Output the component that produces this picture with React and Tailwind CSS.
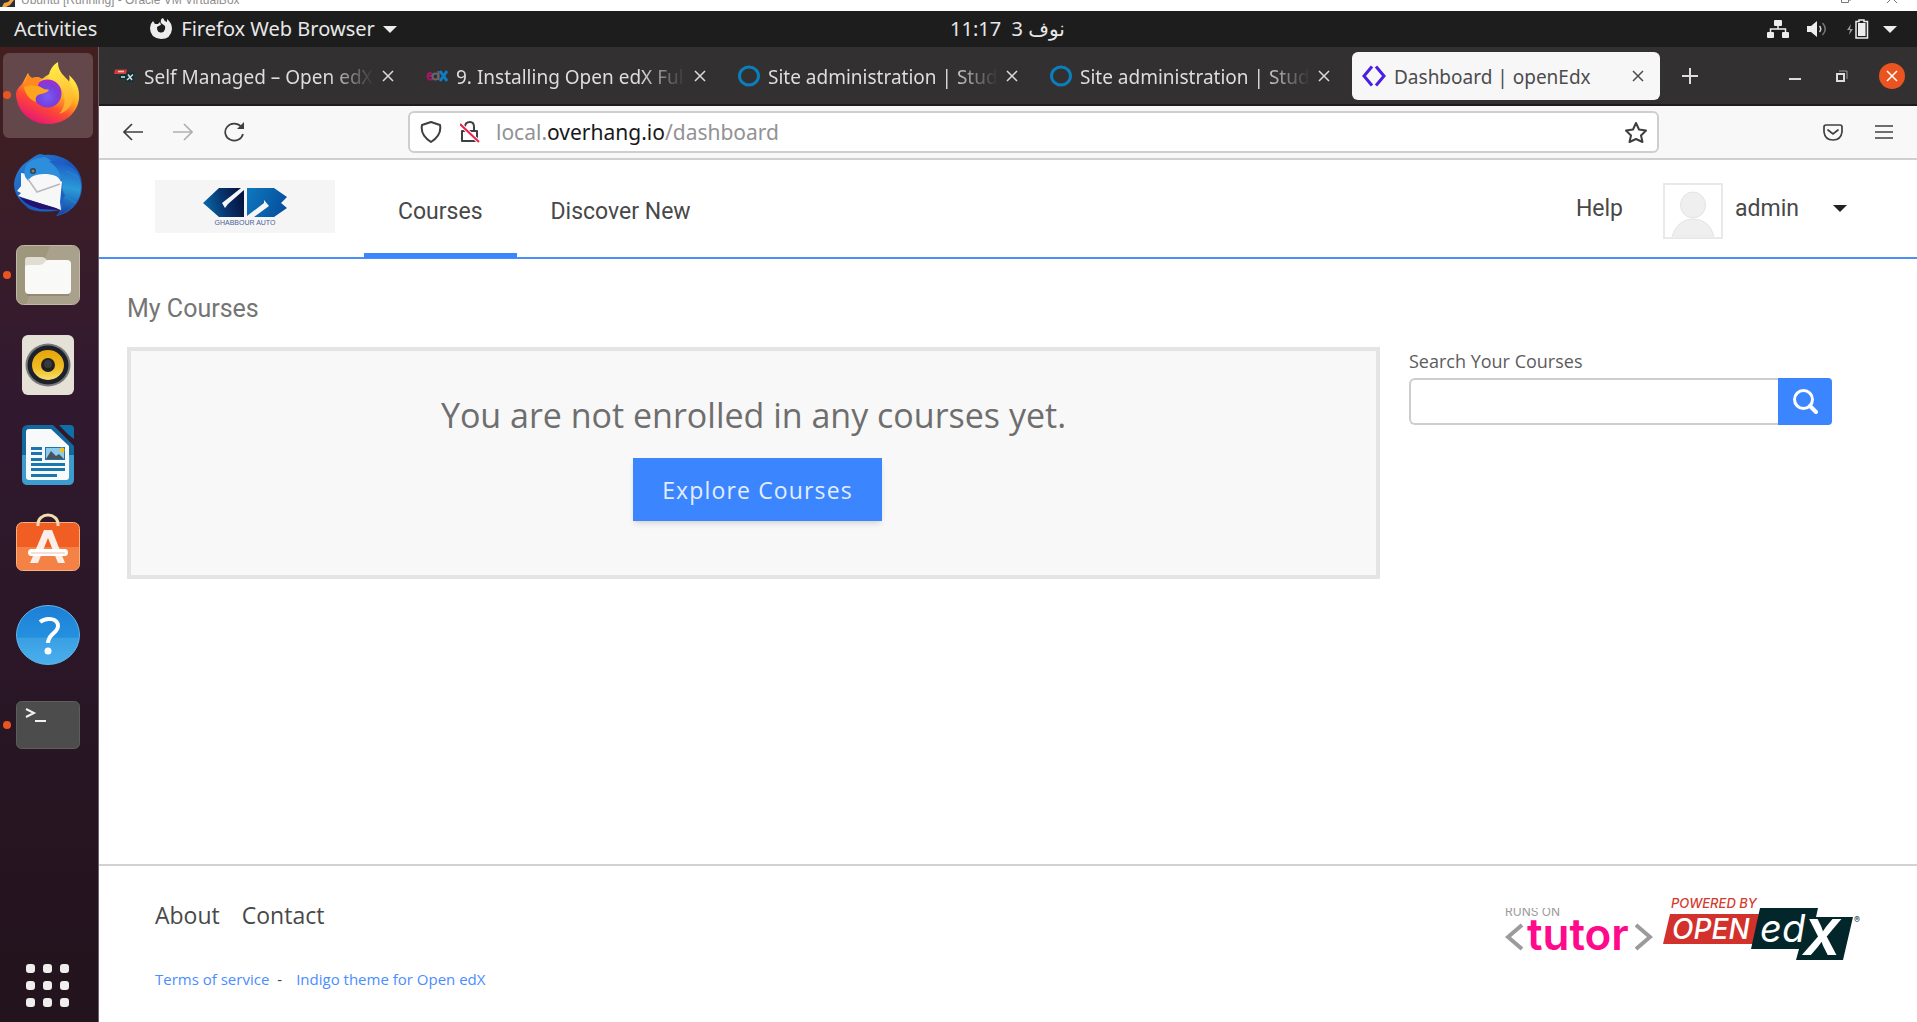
import React from "react";

const ui = "font-['Noto_Sans','DejaVu_Sans',sans-serif]";

function FirefoxIcon() {
  return (
    <svg viewBox="0 0 64 66" className="h-[66px] w-16" aria-hidden="true">
      <defs>
        <linearGradient id="ffBody" x1="0.85" y1="0.05" x2="0.25" y2="1">
          <stop offset="0" stopColor="#fff14a" />
          <stop offset="0.35" stopColor="#ffb020" />
          <stop offset="0.62" stopColor="#ff4b32" />
          <stop offset="1" stopColor="#e4107c" />
        </linearGradient>
        <linearGradient id="ffEar" x1="0.5" y1="0" x2="0.6" y2="1">
          <stop offset="0" stopColor="#fff04a" />
          <stop offset="1" stopColor="#ffa62a" />
        </linearGradient>
        <radialGradient id="ffGlobe" cx="0.5" cy="0.6" r="0.6">
          <stop offset="0" stopColor="#7a5cf5" />
          <stop offset="0.6" stopColor="#7540dc" />
          <stop offset="1" stopColor="#a52ad0" />
        </radialGradient>
      </defs>
      <path d="M6 22 C8 18 10 15 12 11 C13 14 14 15 16 16 C20 15 24 15 26 17 C30 14 33 12 34 12 C32 18 45 14 50 24 C54 21 54 16 53 13 C61 20 64 28 63 37 C61 52 48 62 32 62 C14 62 1 49 0 33 C0 28 3 25 6 22Z" fill="url(#ffBody)" />
      <path d="M33 17 C32 9 37 3 42 0 C42 9 47 13 52 18 C55 22 57 27 57 33 C57 43 51 50 43 52 C50 46 51 31 43 23 C40 20 36 18 33 17Z" fill="url(#ffEar)" />
      <circle cx="31.500" cy="31.500" r="14" fill="url(#ffGlobe)" />
      <path d="M8 25 C14 23 22 23 26 26 C29 28 31 27 33 28 C31 31 28 31 25 32 C20 33 19 36 20 40 C14 38 9 32 8 25Z" fill="#ffa51d" />
      <path d="M12 11 C13 14 14 15 16 16 C20 15 24 15 26 17 C23 20 22 22 22 24 C17 23 12 23 8 25 C9 20 11 15 12 11Z" fill="#ff8a24" />
    </svg>
  );
}

function ThunderbirdIcon() {
  return (
    <svg viewBox="0 0 68 64" className="h-16 w-[68px]" aria-hidden="true">
      <defs>
        <linearGradient id="tbBody" x1="0" y1="0" x2="1" y2="1">
          <stop offset="0" stopColor="#2b87d8" />
          <stop offset="0.5" stopColor="#1a57bd" />
          <stop offset="1" stopColor="#1f6bcb" />
        </linearGradient>
        <linearGradient id="tbWing" x1="0.6" y1="0" x2="0.5" y2="1">
          <stop offset="0" stopColor="#1c56c4" />
          <stop offset="0.5" stopColor="#2b9bd8" />
          <stop offset="1" stopColor="#1640a4" />
        </linearGradient>
      </defs>
      <path d="M26 1 L31 2 C48 0 68 12 68 33 C68 49 56 61 42 63 C44 61 46 59 46 57 C30 60 13 59 11 51 L17 57 C7 50 0 42 0 31 C1 21 6 13 14 8 C18 5 22 2 26 1Z" fill="url(#tbBody)" />
      <path d="M7 20 L20 22 L40 18 L48 29 L46 49 L47 57 L4 43 L7 40 L3 38 L7 33Z" fill="#f7f7f8" />
      <path d="M14 10 C20 5 25 5 31 4 C40 8 48 17 47 29 C45 23 39 21 30 21 C21 21 16 24 14 28 L12 25 C10 23 9 15 14 10Z" fill="#2d8edb" />
      <path d="M14 26 L23 39 L46 31" fill="none" stroke="#b8b9bf" strokeWidth="1.500" />
      <path d="M35 8 C58 9 68 20 67 36 C66 49 56 59 44 62 C49 56 50 52 49 47 L51 42 C47 38 49 33 48 29 C47 20 42 13 35 8Z" fill="url(#tbWing)" />
      <path d="M52 18 L65 24 M52 27 L67 33 M53 36 L66 42 M52 44 L62 50" stroke="#2d8edb" strokeWidth="1" opacity="0.7" />
      <circle cx="19" cy="18" r="3" fill="#304052" />
      <circle cx="19" cy="18" r="1.500" fill="#8b806a" />
      <path d="M5 43 C10 50 16 53 26 56 L46 57 L42 55 L8 45Z" fill="#25106b" />
    </svg>
  );
}

function FilesIcon() {
  return (
    <svg viewBox="0 0 64 60" className="h-[60px] w-16" aria-hidden="true">
      <rect x="0.500" y="0.500" width="63" height="59" rx="7" fill="#9f967e" stroke="#c0b9a8" />
      <path d="M34 1 H57 Q63 1 63 8 V52 Q63 59 57 59 H10 Z" fill="#a9a18b" />
      <path d="M9 23 V15 Q9 12 12 12 H26 Q28 12 30 14 L32 17 H50 V25Z" fill="#e1ddd0" />
      <path d="M9 22 Q9 20 12 20 H24 Q27 20 29 17 Q30 15 32 15 H51 Q55 15 55 19 V45 Q55 49 51 49 H13 Q9 49 9 45Z" fill="#f9f9f8" />
      <path d="M11 50 H53" stroke="#7f775f" strokeWidth="1" />
    </svg>
  );
}

function RhythmboxIcon() {
  return (
    <svg viewBox="0 0 52 60" className="h-[60px] w-[52px]" aria-hidden="true">
      <defs>
        <linearGradient id="rbCone" x1="0" y1="0" x2="0" y2="1">
          <stop offset="0" stopColor="#e5a60a" />
          <stop offset="0.6" stopColor="#efbd22" />
          <stop offset="1" stopColor="#f9e070" />
        </linearGradient>
      </defs>
      <rect x="0" y="0" width="52" height="60" rx="6" fill="#e5e1d6" />
      <ellipse cx="26" cy="30" rx="22.500" ry="21.500" fill="#77797d" />
      <ellipse cx="26" cy="30" rx="20.500" ry="19.500" fill="#1b2029" />
      <ellipse cx="26" cy="30" rx="16" ry="15" fill="url(#rbCone)" />
      <circle cx="26" cy="30" r="7" fill="#1f2022" />
      <circle cx="26" cy="29" r="4" fill="#38393c" />
    </svg>
  );
}

function WriterIcon() {
  return (
    <svg viewBox="0 0 52 60" className="h-[60px] w-[52px]" aria-hidden="true">
      <path d="M6 0 H31 L52 21 V54 Q52 60 46 60 H6 Q0 60 0 54 V6 Q0 0 6 0Z" fill="#13689f" />
      <path d="M0 30 H52 V54 Q52 60 46 60 H6 Q0 60 0 54Z" fill="#3d9bd0" />
      <path d="M37 0 H48 Q52 0 52 4 V14 Q46 10 37 0Z" fill="#0f6fa6" />
      <path d="M7 4 H29 L47 21 V52 Q47 55 44 55 H7 Q4 55 4 52 V7 Q4 4 7 4Z" fill="#f8f9fa" />
      <g fill="#1976ae">
        <rect x="9" y="22" width="11" height="3" />
        <rect x="9" y="27" width="11" height="3" />
        <rect x="9" y="33" width="11" height="3" />
        <rect x="9" y="38" width="34" height="3" />
        <rect x="9" y="43" width="34" height="3" />
        <rect x="9" y="49" width="26" height="3" />
        <rect x="23" y="22" width="20" height="13" />
      </g>
      <rect x="24" y="23" width="18" height="11" fill="#8bcbee" />
      <circle cx="40" cy="25" r="2.500" fill="#f1c021" />
      <path d="M24 34 L29 26 L34 31 L37 29 L42 34Z" fill="#4d5359" />
    </svg>
  );
}

function SoftwareIcon() {
  return (
    <svg viewBox="0 0 64 64" className="size-16" aria-hidden="true">
      <rect x="0.500" y="9.500" width="63" height="48" rx="6" fill="#f05e24" stroke="#f7b07e" />
      <path d="M1 34 H63 V52 Q63 57 57 57 H7 Q1 57 1 52Z" fill="#f48246" />
      <path d="M22 13 V11 A10 9 0 0 1 42 11 V13" fill="none" stroke="#f0dcae" strokeWidth="3" />
      <path d="M28 17 H36 L49 50 H42 L32 25 L22 50 H14Z" fill="#fbeee8" />
      <rect x="12" y="36" width="40" height="7" rx="3.500" fill="#fff" />
      <path d="M15 40 H49" stroke="#e9c1b0" strokeWidth="1" />
    </svg>
  );
}

function HelpIcon() {
  return (
    <svg viewBox="0 0 64 60" className="h-[60px] w-16" aria-hidden="true">
      <defs>
        <linearGradient id="hpBg" x1="0" y1="0" x2="0" y2="1">
          <stop offset="0" stopColor="#1d7fd6" />
          <stop offset="0.54" stopColor="#2590df" />
          <stop offset="0.55" stopColor="#3a9fe3" />
          <stop offset="1" stopColor="#49b0ec" />
        </linearGradient>
      </defs>
      <ellipse cx="32" cy="30" rx="31.500" ry="29.500" fill="url(#hpBg)" stroke="#62b5ee" />
      <path d="M24 17 C30 12 42 13 42 21 C42 28 32 29 32 38" fill="none" stroke="#fff" strokeWidth="4" />
      <circle cx="32" cy="46" r="3.500" fill="#fff" />
    </svg>
  );
}

function TerminalIcon() {
  return (
    <svg viewBox="0 0 64 48" className="h-12 w-16" aria-hidden="true">
      <rect x="0.500" y="0.500" width="63" height="47" rx="5" fill="#4c4c4c" stroke="#5d5d5d" />
      <path d="M10 8 L18 12 L10 16" fill="none" stroke="#f2f2f2" strokeWidth="2" />
      <path d="M19 20 H30" stroke="#f2f2f2" strokeWidth="2" />
    </svg>
  );
}

const dockItems = [
  { name: "Firefox Web Browser", Icon: FirefoxIcon, running: true, active: true },
  { name: "Thunderbird Mail", Icon: ThunderbirdIcon },
  { name: "Files", Icon: FilesIcon, running: true },
  { name: "Rhythmbox", Icon: RhythmboxIcon },
  { name: "LibreOffice Writer", Icon: WriterIcon },
  { name: "Ubuntu Software", Icon: SoftwareIcon },
  { name: "Help", Icon: HelpIcon },
  { name: "Terminal", Icon: TerminalIcon, running: true },
];

function Dock() {
  return (
    <nav aria-label="Dock" className="flex w-[99px] shrink-0 flex-col border-r border-[#6b626b] bg-linear-to-b from-[#43201f] via-[#31192f] via-35% to-[#22131c] pt-[3px] pb-[11px]">
      {dockItems.map(({ name, Icon, running, active }) => (
        <button key={name} type="button" aria-label={name} className="relative flex h-[90px] items-center px-[3px]">
          <span className={active ? "flex h-[85px] w-[90px] items-center justify-center rounded-md bg-[#64474a]" : "flex h-[85px] w-[90px] items-center justify-center"}>
            <Icon />
          </span>
          {running && <span className="absolute left-[3px] size-2 rounded-full bg-[#e95420]" />}
        </button>
      ))}
      <button type="button" aria-label="Show Applications" className="mt-auto flex h-[52px] items-center justify-center pr-1">
        <span className="grid grid-cols-3 gap-2">
          {Array.from({ length: 9 }, (_, i) => (
            <span key={i} className="size-[9px] rounded-[3px] bg-[#f0eeec]" />
          ))}
        </span>
      </button>
    </nav>
  );
}

function TitleStrip() {
  return (
    <div className="flex h-[11px] shrink-0 items-start overflow-hidden bg-white">
      <svg viewBox="0 0 15 7" className="h-[7px] w-[15px]" aria-hidden="true">
        <rect width="15" height="7" fill="#2a2e38" />
        <path d="M2 7 L4 3 L8 2 L10 0 H14 L10 5 L6 7Z" fill="#f2a33c" />
      </svg>
      <span className="ml-[6px] text-[12px] leading-[0px] whitespace-nowrap text-[#8d8d8d] font-['Liberation_Sans',sans-serif]">Ubuntu [Running] - Oracle VM VirtualBox</span>
      <span className="ml-auto flex gap-9 pr-5">
        <svg viewBox="0 0 10 4" className="h-1 w-[10px]" aria-hidden="true"><path d="M0.500 0 V2.500 H7.500 V0 M9 0 V1" fill="none" stroke="#777" /></svg>
        <svg viewBox="0 0 10 4" className="h-1 w-[10px]" aria-hidden="true"><path d="M0 3 L3 0 M10 3 L7 0" fill="none" stroke="#777" /></svg>
      </span>
    </div>
  );
}

function TopBar() {
  return (
    <div className={`grid h-9 shrink-0 grid-cols-[1fr_auto_1fr] items-center bg-[#1d1d1d] pr-5 pl-[14px] text-[20px] leading-6 text-[#e8e8e8] ${ui}`}>
      <div className="flex items-center whitespace-nowrap">
        <button type="button">Activities</button>
        <button type="button" className="ml-[53px] flex items-center">
          <svg viewBox="0 0 22 22" className="mr-[9px] size-[22px]" aria-hidden="true">
            <path d="M3 3 L5 6 H8 L10 4 L11 7 L7 9 Q7 15 12 14 Q16 12 15 8 L11 5 Q10 1 13 0 Q14 3 17 4 V1 Q22 5 22 11 Q21 21 11 21 Q0 20 0 10 Q0 6 3 3Z" fill="#ededed" />
            <circle cx="11" cy="11" r="3.500" fill="#1d1d1d" />
          </svg>
          Firefox Web Browser
          <svg viewBox="0 0 14 7" className="ml-2 h-[7px] w-[14px]" aria-hidden="true"><path d="M0 0 H14 L7 7Z" fill="#ededed" /></svg>
        </button>
      </div>
      <time dir="rtl" className="pl-[104px] whitespace-pre">نوف 3  11:17</time>
      <div className="flex items-center justify-end">
        <svg viewBox="0 0 22 18" className="h-[18px] w-[22px]" aria-hidden="true">
          <g fill="#ededed"><rect x="7" y="0" width="8" height="6" rx="1" /><rect x="0" y="12" width="7" height="6" rx="1" /><rect x="15" y="12" width="7" height="6" rx="1" /></g>
          <path d="M11 6 V9 M3.500 13 V9 H18.500 V13" fill="none" stroke="#ededed" strokeWidth="1.500" />
        </svg>
        <svg viewBox="0 0 22 18" className="ml-[18px] h-[18px] w-[22px]" aria-hidden="true">
          <path d="M0 6 H4 L10 1 V17 L4 12 H0Z" fill="#ededed" />
          <path d="M12.500 6 Q15 9 12.500 12" fill="none" stroke="#d0d0d0" strokeWidth="1.500" />
          <path d="M15.500 3 Q21 9 15.500 15" fill="none" stroke="#777" strokeWidth="1.500" />
        </svg>
        <svg viewBox="0 0 22 20" className="ml-[18px] h-5 w-[22px]" aria-hidden="true">
          <path d="M4 5 L0 11 H3 L2 16 L6 10 H3Z" fill="#999" />
          <path d="M9 2.500 H12 V1 H17 V2.500 H20.500 V19 H9Z" fill="none" stroke="#ededed" strokeWidth="1.500" />
          <rect x="11" y="4" width="7.500" height="13" fill="#ededed" />
        </svg>
        <svg viewBox="0 0 14 7" className="ml-[14px] h-[7px] w-[14px]" aria-hidden="true"><path d="M0 0 H14 L7 7Z" fill="#ededed" /></svg>
      </div>
    </div>
  );
}

const OpenEdxFavicon = () => (
  <svg viewBox="0 0 22 22" className="w-[22px] shrink-0" aria-hidden="true">
    <path d="M1 4.500 H13 L12 9 H0Z" fill="#d43b36" />
    <path d="M4 6.500 H10" stroke="#f4c7c4" strokeWidth="1.500" />
    <path d="M6 9 H13 V7.500 H21 L19 17 H12 V14 H5Z" fill="#0d3237" />
    <path d="M7 12 H11 M14 9.500 L18 15 M19 9.500 L13 15" stroke="#d7dedf" strokeWidth="1.500" />
  </svg>
);

const EdxFavicon = () => (
  <svg viewBox="0 0 22 22" className="w-[22px] shrink-0" aria-hidden="true">
    <path d="M2 11 H6 M6 12 Q6 7.500 3.500 8 Q1 9 1.500 12 Q2.500 15.500 6.500 14" fill="none" stroke="#a31762" strokeWidth="2" />
    <circle cx="9.500" cy="11.500" r="3" fill="none" stroke="#6a6468" strokeWidth="2" />
    <path d="M12.500 6 V15" stroke="#6a6468" strokeWidth="2" />
    <path d="M14 6 L21 16 M21 6 L14 16" stroke="#0d7dc4" strokeWidth="3" />
  </svg>
);

const RingFavicon = () => (
  <svg viewBox="0 0 22 22" className="w-[22px] shrink-0" aria-hidden="true">
    <ellipse cx="11" cy="11" rx="9.500" ry="9" fill="none" stroke="#0b7fbb" strokeWidth="3" />
  </svg>
);

const TutorFavicon = () => (
  <svg viewBox="0 0 24 22" className="w-6 shrink-0" aria-hidden="true">
    <path d="M10 1.500 L2 11 L10 20.500 M14 1.500 L22 11 L14 20.500" fill="none" stroke="#4a1fe0" strokeWidth="3" />
  </svg>
);

function CloseGlyph() {
  return (
    <svg viewBox="0 0 12 12" className="size-3" aria-hidden="true">
      <path d="M1 1 L11 11 M11 1 L1 11" fill="none" stroke="currentColor" strokeWidth="1.500" />
    </svg>
  );
}

const tabs = [
  { title: "Self Managed – Open edX", Icon: OpenEdxFavicon },
  { title: "9. Installing Open edX Full", Icon: EdxFavicon },
  { title: "Site administration | Studio", Icon: RingFavicon },
  { title: "Site administration | Studio", Icon: RingFavicon },
  { title: "Dashboard | openEdx", Icon: TutorFavicon, active: true },
];

function TabBar() {
  return (
    <div className={`flex h-[59px] shrink-0 items-center border-b-2 border-[#1e1c1d] bg-[#333031] pr-3 pl-[5px] text-[19px] leading-6 text-[#dedddd] ${ui}`}>
      <div role="tablist" className="flex gap-1">
        {tabs.map(({ title, Icon, active }, i) => (
          <div key={i} className={active ? "flex h-12 w-[308px] items-center gap-2 rounded-md bg-[#f7f7f7] px-[10px] text-[#4c4c4e]" : "flex h-12 w-[308px] items-center gap-2 px-[10px]"}>
            <Icon />
            <button type="button" role="tab" aria-selected={!!active} className={active ? "flex-1 overflow-hidden pt-[2px] text-left whitespace-nowrap" : "w-[230px] overflow-hidden mask-r-from-80% pt-[2px] text-left whitespace-nowrap"}>{title}</button>
            <button type="button" aria-label={`Close ${title}`} className={active ? "pr-[6px]" : ""}><CloseGlyph /></button>
          </div>
        ))}
      </div>
      <button type="button" aria-label="New tab" className="ml-[21px]">
        <svg viewBox="0 0 18 18" className="size-[18px]" aria-hidden="true"><path d="M9 1 V17 M1 9 H17" stroke="currentColor" strokeWidth="2" /></svg>
      </button>
      <div className="ml-auto flex items-center gap-[35px]">
        <button type="button" aria-label="Minimize">
          <svg viewBox="0 0 12 12" className="size-3" aria-hidden="true"><path d="M0 9 H12" stroke="currentColor" strokeWidth="2" /></svg>
        </button>
        <button type="button" aria-label="Restore">
          <svg viewBox="0 0 12 12" className="size-3" aria-hidden="true"><path d="M1 4 H8 V11 H1Z" fill="none" stroke="currentColor" strokeWidth="2" /><path d="M3 1 H11 V9" fill="none" stroke="#999" /></svg>
        </button>
        <button type="button" aria-label="Close window" className="-ml-1 flex size-[26px] items-center justify-center rounded-full bg-[#e95420] text-white"><CloseGlyph /></button>
      </div>
    </div>
  );
}

function Toolbar() {
  return (
    <div className={`flex h-[54px] shrink-0 items-center border-b-2 border-[#cfcfcf] bg-[#f8f8f8] px-6 text-[#3f3f42] ${ui}`}>
      <div className="flex gap-[30px]">
        <button type="button" aria-label="Back"><svg viewBox="0 0 20 20" className="size-5" aria-hidden="true"><path d="M20 10 H1 M9 2 L1 10 L9 18" fill="none" stroke="currentColor" strokeWidth="1.700" /></svg></button>
        <button type="button" aria-label="Forward"><svg viewBox="0 0 20 20" className="size-5" aria-hidden="true"><path d="M0 10 H19 M11 2 L19 10 L11 18" fill="none" stroke="#b0b0b0" strokeWidth="1.700" /></svg></button>
        <button type="button" aria-label="Reload"><svg viewBox="0 0 22 20" className="h-5 w-[22px]" aria-hidden="true"><path d="M18 4.500 A9 8.500 0 1 0 20 12" fill="none" stroke="currentColor" strokeWidth="1.700" /><path d="M21 0 V7 H14Z" fill="currentColor" /></svg></button>
      </div>
      <div className="ml-[163px] flex h-[42px] min-w-0 flex-1 items-center rounded-md border-2 border-[#cecece] bg-white px-[10px]">
        <svg viewBox="0 0 22 22" className="size-[22px] shrink-0" aria-hidden="true"><path d="M11 1 L20 4 Q22 14 11 21 Q0 14 2 4Z" fill="none" stroke="currentColor" strokeWidth="2" strokeLinejoin="round" /></svg>
        <svg viewBox="0 0 20 22" className="ml-[18px] h-[22px] w-5 shrink-0" aria-hidden="true"><path d="M2 10 H17 V20 H2Z" fill="none" stroke="currentColor" strokeWidth="2" strokeLinejoin="round" /><path d="M5 10 V6 Q5 1 10 1 Q14 1 14 6 V10" fill="none" stroke="currentColor" strokeWidth="2" /><path d="M0 3 L19 21" stroke="#fff" strokeWidth="4" /><path d="M0 3 L19 21" stroke="#ee1f4d" strokeWidth="2" /></svg>
        <div className="ml-4 flex-1 text-[21px] leading-6 text-[#929294]">local.<span className="text-[#18181a]">overhang.io</span>/dashboard</div>
        <button type="button" aria-label="Bookmark this page"><svg viewBox="0 0 22 21" className="h-[21px] w-[22px]" aria-hidden="true"><path d="M11 1 L14 7.500 L21 8.500 L16 13.500 L17.500 20 L11 17 L4.500 20 L6 13.500 L1 8.500 L8 7.500Z" fill="none" stroke="currentColor" strokeWidth="2" strokeLinejoin="round" /></svg></button>
      </div>
      <button type="button" aria-label="Save to Pocket" className="ml-[164px]"><svg viewBox="0 0 20 17" className="h-[17px] w-5" aria-hidden="true"><path d="M3 1 H17 Q19 1 19 3 V8 Q18 16 10 16 Q2 16 1 8 V3 Q1 1 3 1Z" fill="none" stroke="currentColor" strokeWidth="1.700" /><path d="M5 6 L10 10 L15 6" fill="none" stroke="currentColor" strokeWidth="1.700" strokeLinecap="round" /></svg></button>
      <button type="button" aria-label="Open application menu" className="ml-8"><svg viewBox="0 0 18 14" className="h-[14px] w-[18px]" aria-hidden="true"><path d="M0 1 H18 M0 7 H18 M0 13 H18" stroke="currentColor" strokeWidth="1.700" /></svg></button>
    </div>
  );
}

function GhabbourLogo() {
  return (
    <svg viewBox="0 0 180 53" className="h-[53px] w-[180px]" role="img" aria-label="Ghabbour Auto">
      <defs>
        <linearGradient id="gLeft" x1="0" y1="0.600" x2="1" y2="0.400">
          <stop offset="0" stopColor="#0a6aac" /><stop offset="0.5" stopColor="#07356e" /><stop offset="1" stopColor="#06123f" />
        </linearGradient>
        <linearGradient id="gRight" x1="0" y1="0" x2="1" y2="0.300">
          <stop offset="0" stopColor="#0f78be" /><stop offset="1" stopColor="#0752a0" />
        </linearGradient>
      </defs>
      <rect width="180" height="53" fill="#f5f5f5" />
      <path d="M48 23 L64 8 H86 L76 16 L67 23 L70 28 L73 24 L89 10 V37 H64Z" fill="url(#gLeft)" />
      <path d="M92 8 H119 L132 17 L126 23 L132 28 L119 37 H99 L114 26 L109 20 V23 L92 36Z" fill="url(#gRight)" />
      <text x="90" y="45" textAnchor="middle" fontSize="7" fill="#4a639a" fontFamily="Liberation Sans, sans-serif">GHABBOUR AUTO</text>
    </svg>
  );
}

function SiteHeader() {
  return (
    <header className="flex h-[99px] shrink-0 items-stretch border-b-2 border-[#4a8ff8] pr-[70px] pl-14 text-[23px] leading-7 text-[#484848] font-['Roboto',sans-serif]">
      <a href="#home" className="pt-5"><GhabbourLogo /></a>
      <nav className="ml-[29px] flex">
        <a href="#courses" className="-mb-px flex items-center border-b-5 border-[#3b85ff] px-[34px] pt-[11px]">Courses</a>
        <a href="#discover" className="flex items-center px-[34px] pt-[7px]">Discover New</a>
      </nav>
      <div className="ml-auto flex items-center">
        <a href="#help">Help</a>
        <button type="button" className="ml-10 flex items-center">
          <svg viewBox="0 0 60 56" className="mt-1 h-14 w-[60px]" aria-hidden="true">
            <rect x="1" y="1" width="58" height="54" fill="#fff" stroke="#e9e9e9" strokeWidth="2" />
            <path d="M9 53 Q15 36 30 36 Q46 36 51 53Z" fill="#efefef" stroke="#e4e4e4" />
            <ellipse cx="30" cy="22" rx="12.500" ry="13" fill="#efefef" stroke="#e4e4e4" />
          </svg>
          <span className="ml-3">admin</span>
          <svg viewBox="0 0 14 7" className="ml-[34px] h-[7px] w-[14px]" aria-hidden="true"><path d="M0 0 H14 L7 7Z" fill="#222" /></svg>
        </button>
      </div>
    </header>
  );
}

function Dashboard() {
  return (
    <main className="grow pr-[85px] pl-7 font-['Open_Sans',sans-serif]">
      <h1 className="pt-[34px] text-[25px] leading-8 text-[#757575] font-['Roboto',sans-serif]">My Courses</h1>
      <div className="mt-[22px] grid grid-cols-[1fr_423px] items-start gap-[29px]">
        <section className="flex flex-col items-center border-4 border-[#e4e4e4] bg-[#f8f8f8] pt-11 pb-[54px]">
          <p className="text-[34px] leading-10 text-[#6e6e6e]">You are not enrolled in any courses yet.</p>
          <a href="#explore" className="mt-[23px] ml-2 flex h-[63px] items-center bg-[#3b85ff] px-[29px] text-[23px] leading-7 tracking-wider text-[#e3edff] shadow-md">Explore Courses</a>
        </section>
        <form className="flex flex-col" onSubmit={(e) => e.preventDefault()}>
          <label htmlFor="course-search" className="pt-[2px] text-[18px] leading-6 text-[#5c5c5c]">Search Your Courses</label>
          <div className="mt-[5px] flex h-[47px]">
            <input id="course-search" type="text" className="min-w-0 flex-1 rounded-l-md border-2 border-r-0 border-[#cdcdcd] bg-white px-3 text-[18px] outline-none" />
            <button type="submit" aria-label="Search" className="flex w-[54px] items-center justify-center rounded-r-sm bg-[#3b85ff]">
              <svg viewBox="0 0 25 25" className="size-[25px]" aria-hidden="true"><circle cx="10.500" cy="10.500" r="9" fill="none" stroke="#fff" strokeWidth="3" /><path d="M17 17 L23 23" stroke="#fff" strokeWidth="4" strokeLinecap="round" /></svg>
            </button>
          </div>
        </form>
      </div>
    </main>
  );
}

function TutorLogo() {
  return (
    <svg viewBox="0 0 148 44" className="h-11 w-[148px]" role="img" aria-label="Runs on Tutor">
      <text x="0" y="8" fontSize="12" fill="#9b9b9b" fontFamily="Inter, sans-serif">RUNS ON</text>
      <path d="M17 17 L3 29 L17 41 M131 17 L145 29 L131 41" fill="none" stroke="#9b9b9b" strokeWidth="4" />
      <text x="22" y="42" fontSize="44" fontWeight="600" fill="#ff0a8c" fontFamily="Inter, sans-serif">tutor</text>
    </svg>
  );
}

function PoweredByLogo() {
  return (
    <svg viewBox="0 0 200 64" className="h-16 w-[200px]" role="img" aria-label="Powered by Open edX">
      <text x="8" y="10" fontSize="13" fontStyle="italic" fontWeight="500" fill="#d43b30" fontFamily="Inter, sans-serif">POWERED BY</text>
      <path d="M7 16 H96 L92 46 H0Z" fill="#d2322b" />
      <path d="M97 10 H155 L153 19 H190 L180 62 H133 L136 51 H88Z" fill="#03262b" />
      <text x="9" y="41" fontSize="28" fontStyle="italic" fontWeight="500" fill="#fff" fontFamily="Inter, sans-serif">OPEN</text>
      <text x="97" y="44" fontSize="38" fontStyle="italic" fill="#fff" fontFamily="Inter, sans-serif">ed</text>
      <text x="140" y="57" fontSize="50" fontStyle="italic" fontWeight="700" fill="#fff" fontFamily="Inter, sans-serif">X</text>
      <text x="191" y="25" fontSize="9" fontWeight="700" fill="#37555a" fontFamily="Inter, sans-serif">®</text>
    </svg>
  );
}

function SiteFooter() {
  return (
    <footer className="flex h-[158px] shrink-0 justify-between border-t-2 border-[#d2d2d2] pr-[54px] pl-14 font-['Open_Sans',sans-serif]">
      <div>
        <nav className="flex gap-[22px] pt-[35px] text-[23px] leading-7 text-[#484848]">
          <a href="#about">About</a>
          <a href="#contact">Contact</a>
        </nav>
        <div className="flex pt-[38px] text-[15px] leading-6 text-[#4a8dff]">
          <a href="#terms">Terms of service</a>
          <span className="mr-[14px] ml-2 text-[#414141]">-</span>
          <a href="#indigo">Indigo theme for Open edX</a>
        </div>
      </div>
      <div className="flex items-start gap-[10px] pt-8">
        <div className="pt-[10px]"><TutorLogo /></div>
        <PoweredByLogo />
      </div>
    </footer>
  );
}

export default function App() {
  return (
    <div className="flex min-h-screen flex-col bg-white">
      <TitleStrip />
      <TopBar />
      <div className="flex grow">
        <Dock />
        <div className="flex min-w-0 grow flex-col bg-white">
          <TabBar />
          <Toolbar />
          <SiteHeader />
          <Dashboard />
          <SiteFooter />
        </div>
      </div>
    </div>
  );
}
